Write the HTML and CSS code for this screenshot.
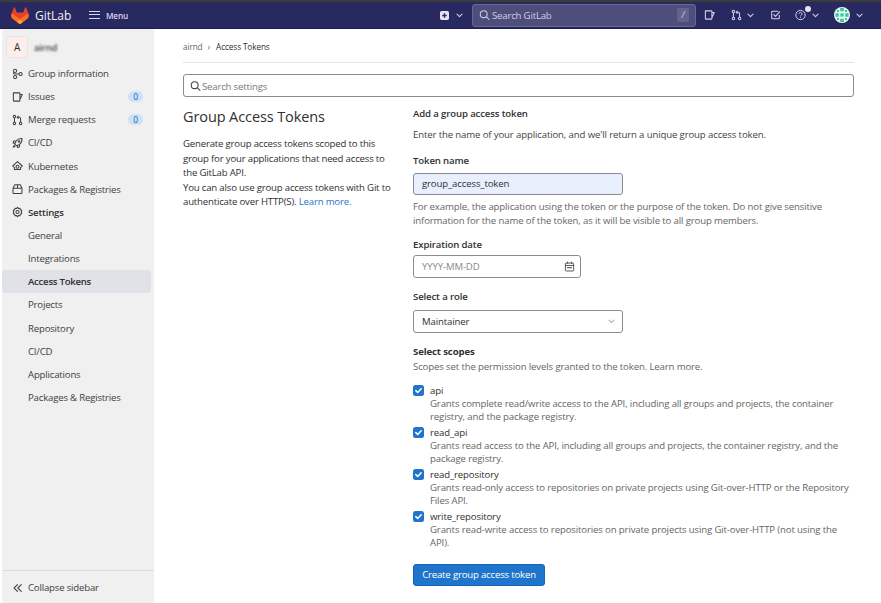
FILE: index.html
```html
<!DOCTYPE html>
<html lang="en">
<head>
<meta charset="utf-8">
<title>Group Access Tokens</title>
<link rel="stylesheet" href="styles.css">
</head>
<body>
<svg class="sprite" width="0" height="0" aria-hidden="true">
  <symbol id="i-chev" viewBox="0 0 16 16"><path d="M3.5 5.5 8 10l4.5-4.5" fill="none" stroke="currentColor" stroke-width="1.8" stroke-linecap="round" stroke-linejoin="round"/></symbol>
  <symbol id="i-search" viewBox="0 0 16 16"><circle cx="6.8" cy="6.8" r="5" fill="none" stroke="currentColor" stroke-width="1.5"/><path d="m10.5 10.5 4 4" stroke="currentColor" stroke-width="1.5" stroke-linecap="round"/></symbol>
  <symbol id="i-issue" viewBox="0 0 16 16"><path d="M2 2h8.500a1 1 0 0 1 1 1v10a1 1 0 0 1-1 1H3a1 1 0 0 1-1-1zM11.500 4.500H15L11.500 11.500" fill="none" stroke="currentColor" stroke-width="1.500" stroke-linejoin="round"/></symbol>
  <symbol id="i-mr" viewBox="0 0 16 16"><g fill="none" stroke="currentColor" stroke-width="1.500"><circle cx="3.500" cy="3" r="1.800"/><circle cx="3.500" cy="13" r="1.800"/><circle cx="12.500" cy="13" r="1.800"/><path d="M3.500 5v6M12.500 11V6a2 2 0 0 0-2-2H8M9.500 1.800 7.500 4l2 2.200"/></g></symbol>
  <symbol id="i-group" viewBox="0 0 16 16"><g fill="none" stroke="currentColor" stroke-width="1.500"><circle cx="4.500" cy="3.500" r="2.300"/><circle cx="4.500" cy="12.500" r="2.300"/><circle cx="12.500" cy="8" r="2.300"/><path d="M2.200 5.500v1c0 1.200.8 1.500 2 1.500h6"/></g></symbol>
  <symbol id="i-rocket" viewBox="0 0 16 16"><g fill="none" stroke="currentColor" stroke-width="1.500" stroke-linejoin="round"><path d="M14.500 1.500c-4-.3-6.700 1-8.500 3.500L4 9.500 6.500 12 11 10c2.500-1.800 3.800-4.500 3.500-8.500z"/><path d="M5.500 5H2.500L1.500 8l3 .5M11 10.500v3L8 14.500l-.5-3M3.500 11 1.800 14.200 5 12.500"/><circle cx="10.300" cy="5.700" r="1.100"/></g></symbol>
  <symbol id="i-kube" viewBox="0 0 16 16"><g fill="none" stroke="currentColor" stroke-width="1.500" stroke-linejoin="round"><path d="M8 1.500 1 8l2.500 2.500v2.500h9v-2.500L15 8z"/><circle cx="8" cy="9" r="2.200"/></g></symbol>
  <symbol id="i-pkg" viewBox="0 0 16 16"><g fill="none" stroke="currentColor" stroke-width="1.500" stroke-linejoin="round"><path d="M1.500 7h13v6.500a1 1 0 0 1-1 1h-11a1 1 0 0 1-1-1zM1.500 7l2.500-5.200h8L14.500 7M8 7V2"/></g></symbol>
  <symbol id="i-gear" viewBox="0 0 16 16"><g fill="none" stroke="currentColor" stroke-width="1.500" stroke-linejoin="round"><path d="M8 1l1.300 1.800 2.200-.4.600 2.200 2.100.9L13.500 8l.7 2.500-2.100.9-.6 2.200-2.200-.4L8 15l-1.300-1.800-2.200.4-.6-2.200-2.100-.9L2.500 8l-.7-2.500 2.100-.9.600-2.200 2.200.4z"/><circle cx="8" cy="8" r="2.300"/></g></symbol>
  <symbol id="i-todo" viewBox="0 0 16 16"><g fill="none" stroke="currentColor" stroke-width="1.500" stroke-linecap="round" stroke-linejoin="round"><path d="M13.500 8.500v4a1 1 0 0 1-1 1h-9a1 1 0 0 1-1-1v-9a1 1 0 0 1 1-1h8"/><path d="m5.500 7.500 2.500 2.500 6-6.500"/></g></symbol>
  <symbol id="i-help" viewBox="0 0 16 16"><circle cx="8" cy="8" r="6.800" fill="none" stroke="currentColor" stroke-width="1.400"/><path d="M5.800 6.200a2.200 2.200 0 1 1 3.400 1.900c-.8.500-1.200 1-1.200 1.900" fill="none" stroke="currentColor" stroke-width="1.400"/><circle cx="8" cy="12" r=".9" fill="currentColor"/></symbol>
  <symbol id="i-check" viewBox="0 0 14 14"><path d="m3.600 7.200 2.400 2.300 4.400-4.700" fill="none" stroke="#fff" stroke-width="2" stroke-linecap="round" stroke-linejoin="round"/></symbol>
</svg>

<div class="strip"></div>
<header class="nav">
  <div class="nav-left">
    <svg class="logo" viewBox="0 0 25 24" aria-hidden="true">
      <path fill="#e24329" d="m24.500 9.700-.03-.09L21.100.85a.9.9 0 0 0-1.700.1l-2.270 6.950H7.870L5.600.95a.9.900 0 0 0-1.700-.1L.53 9.610.5 9.700a6.200 6.200 0 0 0 2.060 7.170l.01.010.03.020 5.100 3.820 2.520 1.910 1.540 1.160a1.040 1.040 0 0 0 1.250 0l1.540-1.160 2.520-1.910 5.130-3.840.01-.01a6.200 6.200 0 0 0 2.290-7.170z"/>
      <path fill="#fc6d26" d="m24.500 9.700-.03-.09a11.300 11.300 0 0 0-4.500 2.020l-7.470 5.650 4.760 3.600 5.130-3.840.01-.01a6.200 6.200 0 0 0 1.600-7.330z"/>
      <path fill="#fca326" d="m7.740 20.880 2.520 1.910 1.540 1.160a1.040 1.040 0 0 0 1.250 0l1.540-1.160 2.520-1.910-4.760-3.600z"/>
      <path fill="#fc6d26" d="M5.030 11.630A11.300 11.300 0 0 0 .53 9.610L.5 9.700a6.200 6.200 0 0 0 2.060 7.170l.01.010.03.020 5.140 3.850 4.760-3.600z"/>
    </svg>
    <span class="brand">GitLab</span>
    <span class="menu"><span class="burger"></span><span>Menu</span></span>
  </div>
  <div class="nav-right">
    <span class="plus-wrap">
      <svg class="plus" viewBox="0 0 16 16" aria-hidden="true"><rect x="0" y="0" width="16" height="16" rx="3" fill="#e7e4f2"/><path d="M8 4v8M4 8h8" stroke="#292961" stroke-width="2.500"/></svg>
      <svg class="chev"><use href="#i-chev"/></svg>
    </span>
    <div class="nav-search">
      <svg class="ico-14"><use href="#i-search"/></svg>
      <span class="nav-search-text">Search GitLab</span>
      <span class="slash">/</span>
    </div>
    <svg class="ico-14 nav-issue"><use href="#i-issue"/></svg>
    <span class="nav-mr"><svg class="ico-14"><use href="#i-mr"/></svg><svg class="chev"><use href="#i-chev"/></svg></span>
    <svg class="ico-14 nav-todo"><use href="#i-todo"/></svg>
    <span class="nav-help"><svg class="ico-14"><use href="#i-help"/></svg><span class="dot"></span><svg class="chev"><use href="#i-chev"/></svg></span>
    <span class="nav-user">
      <svg class="avatar" viewBox="0 0 16 16" aria-hidden="true">
        <circle cx="8" cy="8" r="8" fill="#e6f7f0"/>
        <g fill="#35c79b"><rect x="6.200" y="1" width="3.600" height="3.200"/><rect x="1.500" y="6.200" width="3.200" height="3.600"/><rect x="11.300" y="6.200" width="3.200" height="3.600"/><rect x="6.200" y="11.800" width="3.600" height="3.200"/><rect x="6.400" y="6.400" width="3.200" height="3.200"/><rect x="3" y="3" width="2" height="2"/><rect x="11" y="3" width="2" height="2"/><rect x="3" y="11" width="2" height="2"/><rect x="11" y="11" width="2" height="2"/></g>
      </svg>
      <svg class="chev"><use href="#i-chev"/></svg>
    </span>
  </div>
</header>

<div class="page">
  <aside class="sidebar">
    <div class="side-head"><span class="side-avatar">A</span><span class="side-name">airnd</span></div>
    <nav class="side-list">
      <a class="side-item"><svg class="side-ico"><use href="#i-group"/></svg><span>Group information</span></a>
      <a class="side-item"><svg class="side-ico"><use href="#i-issue"/></svg><span>Issues</span><span class="pill">0</span></a>
      <a class="side-item"><svg class="side-ico"><use href="#i-mr"/></svg><span>Merge requests</span><span class="pill">0</span></a>
      <a class="side-item"><svg class="side-ico"><use href="#i-rocket"/></svg><span>CI/CD</span></a>
      <a class="side-item"><svg class="side-ico"><use href="#i-kube"/></svg><span>Kubernetes</span></a>
      <a class="side-item"><svg class="side-ico"><use href="#i-pkg"/></svg><span>Packages &amp; Registries</span></a>
      <a class="side-item side-strong"><svg class="side-ico"><use href="#i-gear"/></svg><span>Settings</span></a>
      <a class="side-item side-sub">General</a>
      <a class="side-item side-sub">Integrations</a>
      <a class="side-item side-sub side-active">Access Tokens</a>
      <a class="side-item side-sub">Projects</a>
      <a class="side-item side-sub">Repository</a>
      <a class="side-item side-sub">CI/CD</a>
      <a class="side-item side-sub">Applications</a>
      <a class="side-item side-sub">Packages &amp; Registries</a>
    </nav>
    <div class="collapse">
      <svg class="side-ico" viewBox="0 0 16 16" aria-hidden="true"><path d="M8 3 3 8l5 5M13.500 3l-5 5 5 5" fill="none" stroke="currentColor" stroke-width="1.600" stroke-linecap="round" stroke-linejoin="round"/></svg>
      <span>Collapse sidebar</span>
    </div>
  </aside>

  <main class="main">
    <div class="crumbs"><span class="crumb-link">airnd</span><span class="crumb-sep">›</span><span class="crumb-cur">Access Tokens</span></div>
    <div class="settings-search">
      <svg class="ico-14"><use href="#i-search"/></svg>
      <span>Search settings</span>
    </div>
    <div class="cols">
      <section class="intro">
        <h1>Group Access Tokens</h1>
        <p>Generate group access tokens scoped to this group for your applications that need access to the GitLab API.</p>
        <p>You can also use group access tokens with Git to authenticate over HTTP(S). <a class="link">Learn more.</a></p>
      </section>
      <section class="form">
        <h2>Add a group access token</h2>
        <p class="lead">Enter the name of your application, and we'll return a unique group access token.</p>

        <label class="lbl lbl-token">Token name</label>
        <div class="field field-token">group_access_token</div>
        <p class="help">For example, the application using the token or the purpose of the token. Do not give sensitive information for the name of the token, as it will be visible to all group members.</p>

        <label class="lbl lbl-exp">Expiration date</label>
        <div class="field field-date">
          <span class="placeholder">YYYY-MM-DD</span>
          <svg class="cal" viewBox="0 0 16 16" aria-hidden="true"><g fill="none" stroke="currentColor" stroke-width="1.300"><rect x="2" y="3" width="12" height="11.500" rx="1"/><path d="M2 6.500h12M5 1v3M11 1v3"/></g><path d="M4.500 9h7v1.500h-7z" fill="currentColor"/></svg>
        </div>

        <label class="lbl lbl-role">Select a role</label>
        <div class="field field-select">
          <span>Maintainer</span>
          <svg class="chev sel-chev"><use href="#i-chev"/></svg>
        </div>

        <h3>Select scopes</h3>
        <p class="scope-lead">Scopes set the permission levels granted to the token. <a class="link-plain">Learn more.</a></p>

        <div class="scope">
          <span class="box"><svg viewBox="0 0 14 14"><use href="#i-check"/></svg></span>
          <div><div class="scope-name">api</div><div class="scope-desc">Grants complete read/write access to the API, including all groups and projects, the container registry, and the package registry.</div></div>
        </div>
        <div class="scope">
          <span class="box"><svg viewBox="0 0 14 14"><use href="#i-check"/></svg></span>
          <div><div class="scope-name">read_api</div><div class="scope-desc">Grants read access to the API, including all groups and projects, the container registry, and the package registry.</div></div>
        </div>
        <div class="scope">
          <span class="box"><svg viewBox="0 0 14 14"><use href="#i-check"/></svg></span>
          <div><div class="scope-name">read_repository</div><div class="scope-desc">Grants read-only access to repositories on private projects using Git-over-HTTP or the Repository Files API.</div></div>
        </div>
        <div class="scope">
          <span class="box"><svg viewBox="0 0 14 14"><use href="#i-check"/></svg></span>
          <div><div class="scope-name">write_repository</div><div class="scope-desc">Grants read-write access to repositories on private projects using Git-over-HTTP (not using the API).</div></div>
        </div>

        <button class="btn" type="button">Create group access token</button>
      </section>
    </div>
  </main>
</div>
</body>
</html>
```

FILE: styles.css
```css
* { box-sizing: border-box; }
html, body { margin: 0; padding: 0; height: 100%; }
body {
  width: 881px;
  height: 603px;
  overflow: hidden;
  background: #fff;
  color: #303030;
  font-family: "Open Sans", "Noto Sans", sans-serif;
  font-size: 9.600px;
  letter-spacing: -0.180px;
  line-height: 13px;
}
.sprite { position: absolute; }
svg { display: block; flex: none; }
p, h1, h2, h3 { margin: 0; }

.strip { height: 2px; background: #3c3c3c; }
.nav {
  height: 27px;
  background: #292961;
  color: #d5d2e8;
  display: flex;
  align-items: center;
  justify-content: space-between;
  border-bottom: 1px solid #1f1f4f;
}
.nav-left { display: flex; align-items: center; padding-left: 11px; }
.logo { width: 18px; height: 17px; }
.brand { margin-left: 6px; width: 54px; color: #f0eff7; font-size: 12px; letter-spacing: 0; }
.menu { display: flex; align-items: center; gap: 6px; font-size: 8.200px; font-weight: 600; color: #d8d6f0; }
.burger { width: 11px; height: 8px; border-top: 1.200px solid #d8d6f0; border-bottom: 1.200px solid #d8d6f0; position: relative; }
.burger::after { content: ""; position: absolute; left: 0; right: 0; top: 2.200px; height: 1.200px; background: #d8d6f0; }
.nav-right { display: flex; align-items: center; padding-right: 17px; }
.ico-14 { width: 11px; height: 12px; }
.chev { width: 9px; height: 9px; }
.plus { width: 9px; height: 9px; }
.plus-wrap { display: flex; align-items: center; gap: 6px; margin-right: 8px; }
.nav-search {
  width: 224px;
  height: 23px;
  margin-right: 8px;
  display: flex;
  align-items: center;
  padding: 0 6px 0 6px;
  gap: 2px;
  background: #4e4e7c;
  border: 1px solid #67678f;
  border-radius: 3px;
  color: #d0cfe2;
}
.nav-search-text { flex: 1; }
.slash { width: 12px; height: 14px; background: #63638d; border-radius: 2px; text-align: center; font-style: italic; font-size: 9px; }
.nav-issue { margin-right: 16px; }
.nav-mr { display: flex; align-items: center; gap: 4px; margin-right: 15px; }
.nav-todo { margin-right: 14px; }
.nav-help { display: flex; align-items: center; gap: 5px; margin-right: 14px; position: relative; }
.dot { position: absolute; left: 10px; top: -3px; width: 6px; height: 6px; border-radius: 50%; background: #e6e5f4; }
.nav-user { display: flex; align-items: center; gap: 5px; }
.avatar { width: 16px; height: 16px; }

.page { display: flex; height: 574px; padding-left: 2px; }
.sidebar {
  width: 152px;
  background: #f0f0f0;
  display: flex;
  flex-direction: column;
  color: #404040;
}
.side-head { height: 33px; display: flex; align-items: center; padding: 3px 0 0 4px; gap: 6px; }
.side-avatar {
  width: 22px; height: 22px;
  background: #fbeeeb;
  border: 1px solid #eee3e0;
  border-radius: 3px;
  display: flex; align-items: center; justify-content: center;
  font-size: 10px; color: #303030;
}
.side-name { filter: blur(.8px); color: #444; font-size: 9.500px; font-weight: 600; }
.side-list { flex: 1; display: flex; flex-direction: column; padding-top: 0; }
.side-item {
  height: 23.150px;
  flex: none;
  display: flex;
  align-items: center;
  padding: 0 0 0 10px;
  gap: 4px;
}
.side-ico { width: 11px; height: 12px; flex: none; margin-right: 1px; color: #404040; }
.side-strong { font-weight: 600; color: #303030; }
.side-sub { padding-left: 26px; }
.side-active { background: #e1e1e8; border-radius: 3px; margin: 0 3px 0 0; font-weight: 600; letter-spacing: -0.250px; color: #303030; }
.pill {
  margin-left: auto;
  margin-right: 11px;
  width: 15px; height: 11px;
  border-radius: 6px;
  background: #cbe2f9;
  color: #1f5fa8;
  font-size: 8.500px;
  line-height: 11px;
  text-align: center;
}
.collapse {
  height: 33px;
  border-top: 1px solid #dcdcdc;
  display: flex;
  align-items: center;
  padding: 1px 0 0 10px;
  gap: 4px;
}

.main { width: 671px; margin-left: 29px; }
.crumbs {
  height: 34px;
  padding-top: 11px;
  border-bottom: 1px solid #e5e5e5;
  display: flex;
  gap: 5px;
  font-size: 8.200px;
  letter-spacing: -0.100px;
  color: #666;
}
.crumb-cur { color: #303030; margin-left: 1px; }
.crumb-sep { font-size: 9px; }
.settings-search {
  margin-top: 11px;
  height: 23px;
  border: 1px solid #8c8c8c;
  border-radius: 3px;
  display: flex;
  align-items: center;
  gap: 1px;
  padding: 1px 0 0 6px;
  color: #7a7a7a;
}
.settings-search .ico-14 { color: #444; width: 11px; height: 12px; }
.cols { display: flex; gap: 20px; padding-top: 10px; }
.intro { width: 210px; flex: none; line-height: 14.500px; }
.intro h1 { font-size: 14.500px; font-weight: 400; line-height: 20px; margin-bottom: 10px; letter-spacing: -0.100px; color: #303030; }
.link { color: #1f75cb; }
.form { flex: 1; line-height: 14px; color: #444; letter-spacing: -0.130px; }
.form h2 { font-size: 9.600px; font-weight: 600; color: #303030; line-height: 14px; }
.lead { margin-top: 7px; }
.lbl { display: block; font-weight: 600; color: #303030; line-height: 14px; }
.lbl-token { margin-top: 12px; }
.field {
  height: 22px;
  width: 210px;
  border: 1px solid #8c8c8c;
  border-radius: 3px;
  display: flex;
  align-items: center;
  padding: 0 8px;
  color: #303030;
}
.field-token { margin-top: 5px; background: #e8f0fe; }
.help { margin-top: 5px; width: 435px; color: #666; }
.lbl-exp { margin-top: 10px; }
.field-date { margin-top: 3px; height: 23px; width: 168px; justify-content: space-between; padding-right: 5px; }
.placeholder { color: #8a8a8a; }
.cal { width: 11px; height: 11px; color: #444; }
.lbl-role { margin-top: 12px; }
.field-select { margin-top: 6px; height: 23px; justify-content: space-between; padding-right: 6px; }
.sel-chev { color: #b0b0b0; }
.form h3 { margin-top: 12px; font-size: 9.600px; font-weight: 700; line-height: 14px; color: #303030; }
.scope-lead { margin-top: 1px; margin-bottom: 10px; color: #666; }
.link-plain { color: #666; }
.scope { display: flex; gap: 6px; margin-bottom: 3px; min-height: 39px; }
.box {
  width: 11px; height: 11px;
  margin-top: 1px;
  background: #1f75cb;
  border-radius: 2.500px;
  flex: none;
}
.box svg { width: 11px; height: 11px; }
.scope-name { color: #303030; line-height: 13px; }
.scope-desc { color: #666; line-height: 12.500px; width: 422px; margin-top: 1px; }
.btn {
  display: block;
  margin-top: 15px;
  width: 132px;
  height: 22px;
  padding: 0;
  background: #1f75cb;
  border: 1px solid #1068bf;
  border-radius: 3px;
  color: #fff;
  font: 9.600px/20px "Open Sans", "Noto Sans", sans-serif;
  letter-spacing: -0.180px;
}
```
